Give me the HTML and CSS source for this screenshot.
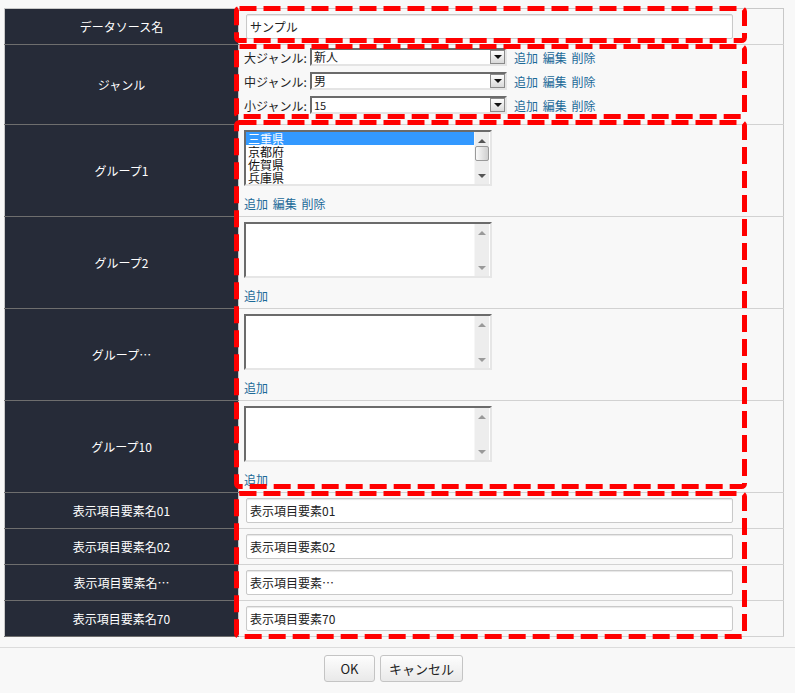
FILE: index.html
```html
<!doctype html>
<html lang="ja">

<head>
    <meta charset="UTF-8">
    <title>データソース編集</title>
    <link rel="stylesheet" href="styles.css">
</head>

<body>
    <div class="page">
        <table class="form-table">
            <tr>
                <th>データソース名</th>
                <td class="cell-input"><input class="text-input" type="text" value="サンプル"></td>
            </tr>
            <tr>
                <th>ジャンル</th>
                <td class="cell-genre">
                    <div class="genre-line">
                        <span class="genre-label">大ジャンル:</span>
                        <div class="select"><span class="select-value">新人</span><span class="select-btn"><i class="tri-down"></i></span></div>
                        <span class="links"><a href="#">追加</a> <a href="#">編集</a> <a href="#">削除</a></span>
                    </div>
                    <div class="genre-line">
                        <span class="genre-label">中ジャンル:</span>
                        <div class="select"><span class="select-value">男</span><span class="select-btn"><i class="tri-down"></i></span></div>
                        <span class="links"><a href="#">追加</a> <a href="#">編集</a> <a href="#">削除</a></span>
                    </div>
                    <div class="genre-line">
                        <span class="genre-label">小ジャンル:</span>
                        <div class="select"><span class="select-value num">15</span><span class="select-btn"><i class="tri-down"></i></span></div>
                        <span class="links"><a href="#">追加</a> <a href="#">編集</a> <a href="#">削除</a></span>
                    </div>
                </td>
            </tr>
            <tr>
                <th>グループ1</th>
                <td class="cell-group">
                    <div class="listbox">
                        <div class="options">
                            <div class="option selected">三重県</div>
                            <div class="option">京都府</div>
                            <div class="option">佐賀県</div>
                            <div class="option">兵庫県</div>
                        </div>
                        <div class="scrollbar">
                            <i class="tri-up dark"></i>
                            <span class="thumb"></span>
                            <i class="tri-down dark"></i>
                        </div>
                    </div>
                    <div class="group-links"><a href="#">追加</a> <a href="#">編集</a> <a href="#">削除</a></div>
                </td>
            </tr>
            <tr>
                <th>グループ2</th>
                <td class="cell-group">
                    <div class="listbox">
                        <div class="options"></div>
                        <div class="scrollbar"><i class="tri-up"></i><i class="tri-down"></i></div>
                    </div>
                    <div class="group-links"><a href="#">追加</a></div>
                </td>
            </tr>
            <tr>
                <th>グループ…</th>
                <td class="cell-group">
                    <div class="listbox">
                        <div class="options"></div>
                        <div class="scrollbar"><i class="tri-up"></i><i class="tri-down"></i></div>
                    </div>
                    <div class="group-links"><a href="#">追加</a></div>
                </td>
            </tr>
            <tr>
                <th>グループ10</th>
                <td class="cell-group">
                    <div class="listbox">
                        <div class="options"></div>
                        <div class="scrollbar"><i class="tri-up"></i><i class="tri-down"></i></div>
                    </div>
                    <div class="group-links"><a href="#">追加</a></div>
                </td>
            </tr>
            <tr>
                <th>表示項目要素名01</th>
                <td class="cell-input"><input class="text-input" type="text" value="表示項目要素01"></td>
            </tr>
            <tr>
                <th>表示項目要素名02</th>
                <td class="cell-input"><input class="text-input" type="text" value="表示項目要素02"></td>
            </tr>
            <tr>
                <th>表示項目要素名…</th>
                <td class="cell-input"><input class="text-input" type="text" value="表示項目要素…"></td>
            </tr>
            <tr>
                <th>表示項目要素名70</th>
                <td class="cell-input"><input class="text-input" type="text" value="表示項目要素70"></td>
            </tr>
        </table>

        <div class="footer">
            <button class="btn">OK</button>
            <button class="btn">キャンセル</button>
        </div>

        <!-- annotation boxes -->
        <svg class="marks" width="795" height="693" viewBox="0 0 795 693">
            <rect x="236.5" y="8.5" width="508" height="32" rx="3" />
            <rect x="236.5" y="46.5" width="508" height="70" rx="3" />
            <rect x="236.5" y="122.5" width="508" height="364" rx="3" />
            <rect x="236.5" y="493.5" width="508" height="143" rx="3" />
        </svg>
    </div>
</body>
</html>
```

FILE: styles.css
```css
body {
    margin: 0;
    background-color: #f8f8f8;
    font-family: "Noto Sans CJK JP", "Noto Sans", sans-serif;
    font-size: 12px;
    color: #222;
}

.page {
    position: relative;
    width: 795px;
    height: 693px;
    padding-top: 8px;
    box-sizing: border-box;
}

.form-table {
    border-collapse: collapse;
    width: 780px;
    margin-left: 4px;
    border: 1px solid #c8c8c8;
}

.form-table th {
    width: 233px;
    padding: 0;
    background-color: #262b38;
    color: #fff;
    font-weight: normal;
    font-size: 12px;
    text-align: center;
    vertical-align: middle;
    border-bottom: 1px solid #6e6e6e;
    border-right: 1px solid #c8c8c8;
}

.form-table td {
    padding: 0 5px;
    vertical-align: top;
    border-bottom: 1px solid #d2d2d2;
}

.cell-input {
    height: 35px;
}

.text-input {
    display: block;
    box-sizing: border-box;
    width: 487px;
    height: 25px;
    margin: 5px 0 5px 2px;
    padding: 0 3px;
    border: 1px solid #c9c9c9;
    border-radius: 2px;
    box-shadow: inset 0 1px 1px #e6e6e6;
    background: #fff;
    font-family: inherit;
    font-size: 12px;
    color: #222;
    outline: none;
}

/* genre */
.cell-genre {
    padding-bottom: 7px !important;
}

.genre-line {
    display: flex;
    align-items: center;
    height: 24px;
}

.genre-label {
    width: 66px;
    white-space: nowrap;
}

.select {
    display: flex;
    align-items: center;
    box-sizing: border-box;
    width: 197px;
    height: 18px;
    border: 2px solid;
    border-color: #6b6b6b #e4e4e4 #e4e4e4 #6b6b6b;
    background: #fff;
}

.select-value {
    flex: 1;
    padding-left: 2px;
    line-height: 14px;
}

.select-value.num {
    font-size: 11px;
}

.select-btn {
    display: flex;
    align-items: center;
    justify-content: center;
    box-sizing: border-box;
    width: 15px;
    height: 14px;
    border: 1px solid #8a8a8a;
    background: linear-gradient(#fdfdfd, #d9d9d9);
}

.tri-down {
    width: 0;
    height: 0;
    border-left: 4px solid transparent;
    border-right: 4px solid transparent;
    border-top: 4px solid #9a9a9a;
}

.tri-up {
    width: 0;
    height: 0;
    border-left: 4px solid transparent;
    border-right: 4px solid transparent;
    border-bottom: 4px solid #9a9a9a;
}

.select-btn .tri-down {
    border-top-color: #111;
}

.tri-up.dark {
    border-bottom-color: #555;
}

.tri-down.dark {
    border-top-color: #555;
}

.links {
    margin-left: 7px;
    white-space: nowrap;
    word-spacing: 2px;
}

a {
    color: #1c6a98;
    text-decoration: none;
}

/* groups */
.cell-group {
    padding-top: 5px !important;
}

.listbox {
    display: flex;
    box-sizing: border-box;
    width: 248px;
    height: 56px;
    border: 2px solid;
    border-color: #6b6b6b #e6e6e6 #e6e6e6 #6b6b6b;
    background: #fff;
}

.options {
    flex: 1;
    padding-top: 0;
    overflow: hidden;
}

.option {
    height: 13px;
    line-height: 13px;
    padding-left: 2px;
    font-size: 12px;
    color: #111;
}

.option.selected {
    background-color: #3399ff;
    color: #fff;
}

.scrollbar {
    display: flex;
    flex-direction: column;
    align-items: center;
    justify-content: space-between;
    width: 15px;
    padding: 7px 0 6px;
    margin-right: 1px;
    box-sizing: border-box;
    background: #ededed;
    border-left: 1px solid #f6f6f6;
}

.thumb {
    display: block;
    box-sizing: border-box;
    width: 14px;
    height: 15px;
    margin-top: -10px;
    border: 1px solid #9a9a9a;
    border-radius: 2px;
    background: linear-gradient(90deg, #fafafa, #cfcfcf);
}

.group-links {
    height: 24px;
    line-height: 24px;
    margin-top: 6px;
    white-space: nowrap;
    word-spacing: 2px;
}

/* footer */
.footer {
    display: flex;
    justify-content: center;
    gap: 5px;
    margin-top: 10px;
    padding: 7px 8px 0 0;
    border-top: 1px solid #dcdcdc;
}

.btn {
    height: 27px;
    padding: 0 8px;
    min-width: 51px;
    border: 1px solid #c4c4c4;
    border-radius: 3px;
    background: linear-gradient(#fdfdfd, #e9e9e9);
    font-family: inherit;
    font-size: 13px;
    color: #222;
}

.marks {
    position: absolute;
    top: 0;
    left: 0;
    pointer-events: none;
}

.marks rect {
    fill: none;
    stroke: #ff0000;
    stroke-width: 5;
    stroke-dasharray: 17 7;
}
```
